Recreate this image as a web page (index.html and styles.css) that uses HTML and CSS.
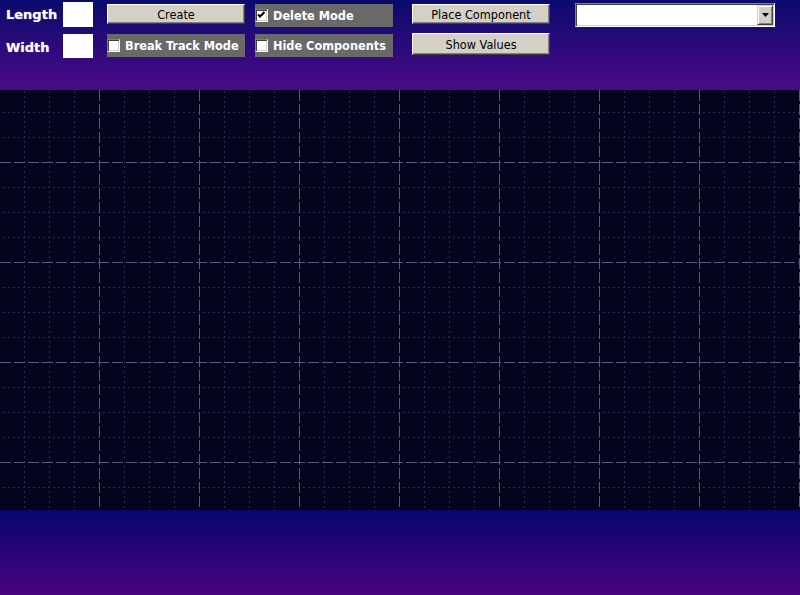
FILE: index.html
```html
<!DOCTYPE html>
<html>
<head>
<meta charset="utf-8">
<title>Stripboard Designer</title>
<link rel="stylesheet" href="styles.css">
</head>
<body>
<div class="app">
  <header class="toolbar">
    <span class="label">Length</span>
    <input class="field" type="text" value="">
    <button class="btn">Create</button>
    <label class="toggle"><span class="check checked"><svg width="11" height="11" viewBox="0 0 11 11"><path d="M2 4.5 L4 6.5 L8.5 2" fill="none" stroke="#000" stroke-width="2"/></svg></span>Delete Mode</label>
    <button class="btn">Place Component</button>
    <div class="combo"><span class="dd"><svg width="7" height="4" viewBox="0 0 7 4"><path d="M0 0H7L3.5 4Z" fill="#000"/></svg></span></div>

    <span class="label">Width</span>
    <input class="field row2" type="text" value="">
    <label class="toggle row2"><span class="check"></span>Break Track Mode</label>
    <label class="toggle row2"><span class="check"></span>Hide Components</label>
    <button class="btn tall">Show Values</button>
  </header>

  <main class="board">
    <svg width="800" height="420" viewBox="0 0 800 420">
      <g class="minor">
        <path class="mv" d="M24.5 0V420M49.5 0V420M74.5 0V420M124.5 0V420M149.5 0V420M174.5 0V420M224.5 0V420M249.5 0V420M274.5 0V420M324.5 0V420M349.5 0V420M374.5 0V420M424.5 0V420M449.5 0V420M474.5 0V420M524.5 0V420M549.5 0V420M574.5 0V420M624.5 0V420M649.5 0V420M674.5 0V420M724.5 0V420M749.5 0V420M774.5 0V420"/>
        <path class="mh" d="M0 22.5H800M0 47.5H800M0 97.5H800M0 122.5H800M0 147.5H800M0 197.5H800M0 222.5H800M0 247.5H800M0 297.5H800M0 322.5H800M0 347.5H800M0 397.5H800"/>
      </g>
      <g class="major">
        <path class="jv" d="M99.5 0V420M199.5 0V420M299.5 0V420M399.5 0V420M499.5 0V420M599.5 0V420M699.5 0V420M799.5 0V420"/>
        <path class="jh" d="M0 72.5H800M0 172.5H800M0 272.5H800M0 372.5H800"/>
      </g>
    </svg>
  </main>

  <footer class="bottom"></footer>
</div>
</body>
</html>
```

FILE: styles.css
```css
html, body {
  margin: 0;
  padding: 0;
  background: #4a037f;
}

body {
  font-family: "DejaVu Sans Condensed", "DejaVu Sans", sans-serif;
}

.app {
  width: 800px;
  height: 595px;
  display: flex;
  flex-direction: column;
}

.toolbar {
  height: 90px;
  box-sizing: border-box;
  padding-left: 6px;
  background: linear-gradient(#0b0a6e, #4b0a87);
  display: grid;
  grid-template-columns: 57px 44px 148px 157px 163px 200px;
  grid-template-rows: 33px 57px;
  align-items: start;
}

.label {
  font-family: "DejaVu Sans", sans-serif;
  font-weight: bold;
  font-size: 13px;
  line-height: 24px;
  margin-top: 3px;
  color: #fff;
  text-shadow: 0 0 1px #a898d8;
}

.field {
  width: 30px;
  height: 25px;
  margin: 2px 0 0 0;
  padding: 0;
  border: none;
  background: #fff;
  box-sizing: border-box;
}

.field.row2 {
  margin-top: 1px;
  height: 24px;
}

.btn {
  width: 138px;
  height: 20px;
  margin: 4px 0 0 0;
  padding: 0;
  box-sizing: border-box;
  background: #d4d0c8;
  border: 1px solid;
  border-color: #fff #404040 #404040 #fff;
  box-shadow: inset -1px -1px #808080;
  font-family: "DejaVu Sans Condensed", "DejaVu Sans", sans-serif;
  font-size: 12.6px;
  color: #000;
  display: flex;
  align-items: center;
  justify-content: center;
}

.btn.tall {
  height: 22px;
  margin-top: 0;
}

.toggle {
  width: 138px;
  height: 23px;
  margin-top: 4px;
  box-sizing: border-box;
  background: #696969;
  display: flex;
  align-items: center;
  gap: 5px;
  color: #fff;
  font-weight: bold;
  font-size: 12.6px;
  white-space: nowrap;
}

.toggle.row2 {
  margin-top: 1px;
}

.check {
  width: 13px;
  height: 13px;
  box-sizing: border-box;
  flex: none;
  background: #fff;
  border: 1px solid;
  border-color: #808080 #fff #fff #808080;
  box-shadow: inset 1px 1px #404040, inset -1px -1px #d4d0c8;
  display: flex;
  align-items: center;
  justify-content: center;
}

.check svg {
  display: block;
}

.combo {
  width: 200px;
  height: 24px;
  margin-top: 3px;
  box-sizing: border-box;
  padding: 1px;
  background: #fff;
  border: 1px solid;
  border-color: #808080 #fff #fff #808080;
  box-shadow: inset 1px 1px #404040, inset -1px -1px #d4d0c8;
  display: flex;
  justify-content: flex-end;
}

.dd {
  width: 16px;
  height: 20px;
  box-sizing: border-box;
  background: #d4d0c8;
  border: 1px solid;
  border-color: #d4d0c8 #404040 #404040 #d4d0c8;
  box-shadow: inset 1px 1px #fff, inset -1px -1px #808080;
  display: flex;
  align-items: center;
  justify-content: center;
}

.dd svg {
  display: block;
}

.board {
  height: 420px;
  flex: none;
  background: #05041f;
}

.board svg {
  display: block;
}

.minor path {
  fill: none;
  stroke: #2b2a55;
  stroke-width: 1;
  stroke-dasharray: 2 3;
}

.minor .mv {
  stroke-dashoffset: 4;
}

.minor .mh {
  stroke-dashoffset: 2;
}

.major path {
  fill: none;
  stroke: #5a5983;
  stroke-width: 1;
  stroke-dasharray: 11 3;
}

.bottom {
  flex: 1;
  background: linear-gradient(#08066e, #4a037f);
}
```
